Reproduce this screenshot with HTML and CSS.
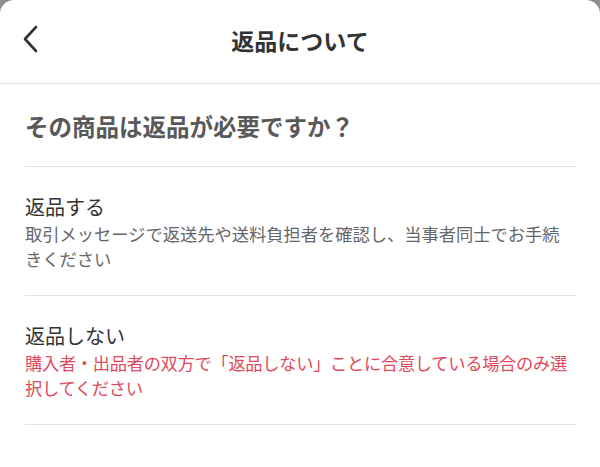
FILE: index.html
```html
<!DOCTYPE html>
<html lang="ja">
<head>
<meta charset="utf-8">
<link rel="stylesheet" href="styles.css">
</head>
<body>
<div class="sheet">
  <header class="header">
    <svg class="back" width="20" height="30" viewBox="0 0 20 30">
      <polyline points="14,3 3,15 14,27" fill="none" stroke="#333" stroke-width="2.6" stroke-linecap="round" stroke-linejoin="round"/>
    </svg>
    <h1 class="title">返品について</h1>
  </header>
  <main class="content">
    <div class="question">その商品は返品が必要ですか？</div>
    <div class="item">
      <div class="item-title">返品する</div>
      <div class="item-desc">取引メッセージで返送先や送料負担者を確認し、当事者同士でお手続きください</div>
    </div>
    <div class="item">
      <div class="item-title">返品しない</div>
      <div class="item-desc warn">購入者・出品者の双方で「返品しない」ことに合意している場合のみ選択してください</div>
    </div>
  </main>
</div>
</body>
</html>
```
FILE: styles.css
```css
html, body {
  margin: 0;
  padding: 0;
  height: 100%;
}
body {
  background: #8e8e8e;
  font-family: "Noto Sans CJK JP", "Noto Sans", sans-serif;
  color: #333;
}
.sheet {
  background: #fff;
  min-height: 100%;
  border-radius: 14px 14px 0 0;
}
.header {
  height: 83px;
  border-bottom: 1px solid #e3e3e3;
  display: flex;
  align-items: center;
  justify-content: center;
  position: relative;
}
.back {
  position: absolute;
  left: 22px;
  top: 24px;
}
.title {
  margin: 0;
  font-size: 23px;
  font-weight: 700;
  color: #333;
  line-height: 1;
  padding-bottom: 2px;
}
.content {
  padding: 0 24px 0 25px;
}
.question {
  font-size: 23.5px;
  font-weight: 700;
  color: #595959;
  line-height: 32px;
  padding: 26px 0 24px;
  border-bottom: 1px solid #e3e3e3;
}
.item {
  padding: 26px 0 24px;
  border-bottom: 1px solid #e3e3e3;
}
.item-title {
  font-size: 20px;
  line-height: 28px;
  color: #333;
}
.item-desc {
  font-size: 17.25px;
  line-height: 25px;
  color: #666;
}
.warn {
  color: #e04a5c;
  letter-spacing: -0.3px;
}
```
